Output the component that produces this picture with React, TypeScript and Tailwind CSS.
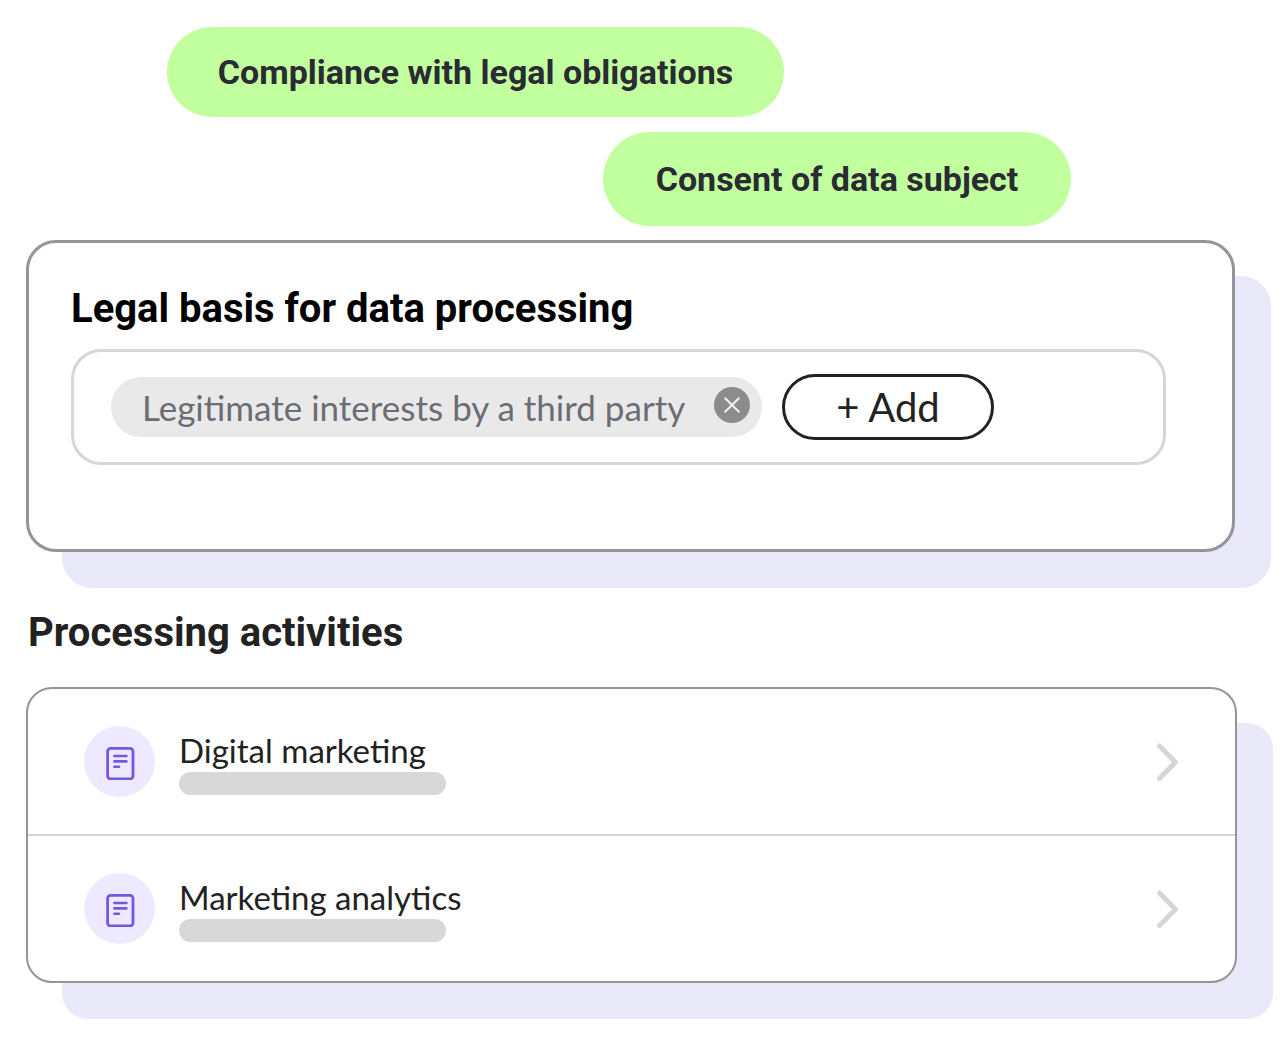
import React from "react";

const activities = ["Digital marketing", "Marketing analytics"];

function DocumentIcon() {
  return (
    <svg className="h-9 w-9" viewBox="0 0 36 36" fill="none" stroke="#7857e0" strokeLinecap="round" aria-hidden="true">
      <rect x="5.6" y="4.4" width="25.400" height="30.600" rx="3" strokeWidth="2.8" />
      <path d="M12.400 12h12M12.400 17.400h12M12.400 22.800h4.600" strokeWidth="2.6" />
    </svg>
  );
}

function ChevronIcon() {
  return (
    <svg className="h-10 w-6 shrink-0" viewBox="0 0 24 40" fill="none" stroke="#d6d6d6" strokeWidth="5" strokeLinecap="round" strokeLinejoin="round" aria-hidden="true">
      <path d="M4.500 4l16 16.200L4.500 36.400" />
    </svg>
  );
}

function Suggestion({ label, className }: { label: string; className: string }) {
  return (
    <button type="button" className={`block rounded-full bg-[#c2ff9e] text-center font-['Roboto',sans-serif] text-[34px] leading-[48px] font-bold whitespace-nowrap text-[#2a2b33] ${className}`}>
      {label}
    </button>
  );
}

export default function App() {
  return (
    <main className="min-h-screen bg-white pt-[27px] pr-[51px] pb-[58px] pl-[26px] font-['Lato',sans-serif] text-[#222222]">
      <div className="flex flex-col items-start gap-[15px]">
        <Suggestion label="Compliance with legal obligations" className="ml-[141px] h-[90px] w-[617px]" />
        <Suggestion label="Consent of data subject" className="ml-[577px] h-[94px] w-[468px]" />
      </div>

      <section className="mt-[14px] mr-[2px] rounded-[30px] border-3 border-[#949499] bg-white px-[42px] pt-[42px] pb-[84px] shadow-[36px_36px_0_#eae9f9]">
        <h2 className="font-['Roboto',sans-serif] text-[40px] leading-[48px] font-bold text-black">
          Legal basis for data processing
        </h2>
        <div className="mt-4 mr-[24px] flex h-[116px] items-center gap-5 rounded-[30px] border-3 border-[#d6d6d6] pl-[37px]">
          <span className="flex h-[60px] w-[651px] items-center justify-between rounded-full bg-[#e9e9e9] pr-3 pl-[31px] text-[35px] leading-[48px] whitespace-nowrap text-[#6c6c74]">
            Legitimate interests by a third party
            <button type="button" aria-label="Remove" className="mb-1 flex h-9 w-9 items-center justify-center rounded-full bg-[#8c8c8c]">
              <svg className="h-4 w-4" viewBox="0 0 16 16" fill="none" stroke="#f2f2f2" strokeWidth="2" strokeLinecap="round" aria-hidden="true">
                <path d="M1.200 1.200l13.600 13.600M14.800 1.200L1.200 14.800" />
              </svg>
            </button>
          </span>
          <button type="button" className="h-[66px] w-[212px] rounded-full border-[3px] border-[#222222] text-[40px] leading-[48px] whitespace-nowrap">
            + Add
          </button>
        </div>
      </section>

      <h2 className="mt-[57px] pl-[2px] font-['Roboto',sans-serif] text-[40px] leading-[48px] font-bold">
        Processing activities
      </h2>

      <ul className="mt-[30px] rounded-[26px] border-2 border-[#949499] bg-white shadow-[36px_36px_0_#eae9f9]">
        {activities.map((name) => (
          <li key={name} className="border-[#d6d6d6] not-first:border-t-2">
            <button type="button" className="flex h-[145px] w-full items-center pr-14 pl-14 text-left">
              <span className="flex h-[71px] w-[71px] shrink-0 items-center justify-center rounded-full bg-[#ede9fe]">
                <DocumentIcon />
              </span>
              <span className="ml-6 flex-1">
                <span className="block text-[33px] leading-[44px]">{name}</span>
                <span className="block h-[23px] w-[267px] rounded-full bg-[#d8d8d8]" />
              </span>
              <ChevronIcon />
            </button>
          </li>
        ))}
      </ul>
    </main>
  );
}
